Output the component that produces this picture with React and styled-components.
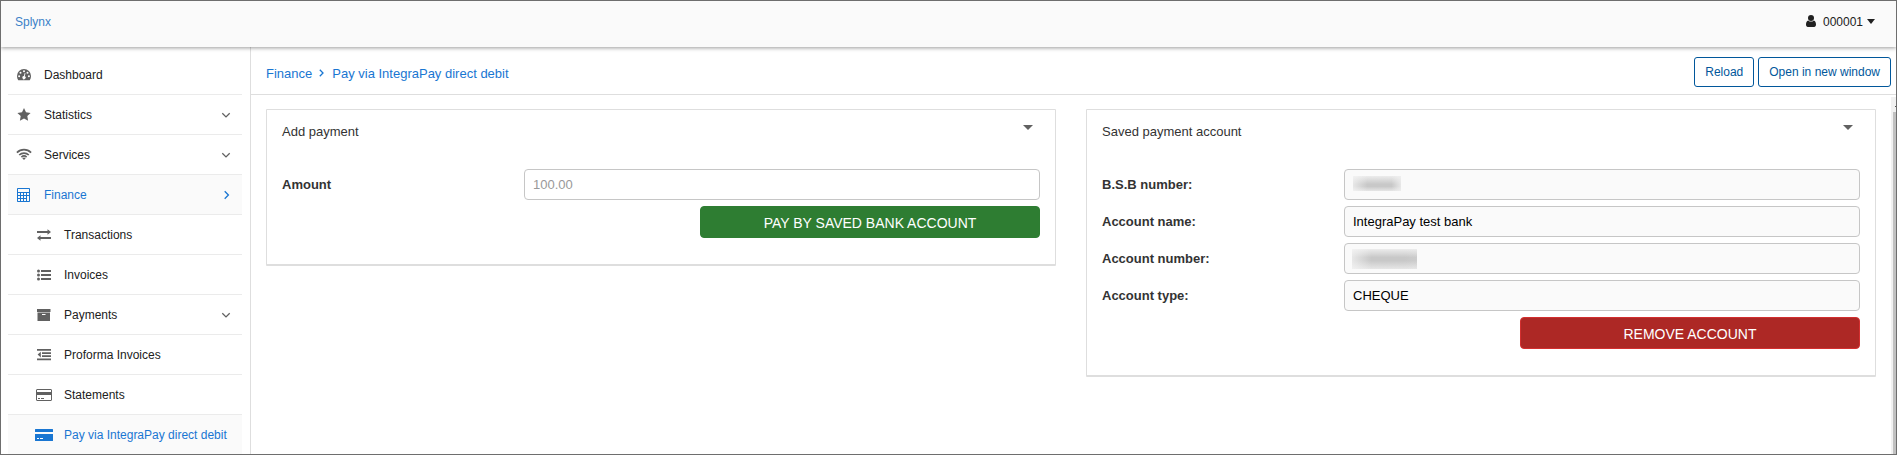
import React from "react";
import styled, { createGlobalStyle, css } from "styled-components";

const Global = createGlobalStyle`
  *, *::before, *::after { box-sizing: border-box; }
  html, body { margin: 0; height: 100%; overflow: hidden; background: #fff; }
  body, input, button { font-family: "Liberation Sans", Arial, sans-serif; }
`;

const Window = styled.div`
  display: flex;
  flex-direction: column;
  width: 1897px;
  height: 455px;
  overflow: hidden;
  border: 1px solid #6e6e6e;
  background: #fff;
  color: #212121;
  font-size: 12px;
`;

const Header = styled.header`
  position: relative;
  z-index: 2;
  flex: none;
  display: flex;
  align-items: center;
  justify-content: space-between;
  height: 46px;
  padding: 0 21px 4px 14px;
  background: #fafafa;
  box-shadow: 0 1px 4px rgba(0, 0, 0, 0.4);
`;

const Brand = styled.a`
  color: #3a81c8;
`;

const UserMenu = styled.div`
  display: flex;
  align-items: center;

  svg {
    margin-bottom: 2px;
  }
`;

const UserName = styled.span`
  margin: 0 4px 0 7px;
`;

const Body = styled.div`
  flex: 1;
  display: flex;
  min-height: 0;
`;

const Sidebar = styled.nav`
  flex: none;
  width: 250px;
  padding: 8px 8px 0 7px;
  border-right: 1px solid #dedede;
`;

const MenuItem = styled.a`
  display: flex;
  align-items: center;
  height: 40px;
  padding: 1px 11px 0 ${(p) => (p.$nested ? 25 : 5)}px;
  border-bottom: 1px solid #ebebeb;
  color: #212121;
  ${(p) =>
    p.$active &&
    css`
      background: #fafafa;
      color: #1976d2;
    `}
`;

const MenuIcon = styled.span`
  flex: none;
  display: flex;
  justify-content: center;
  width: 22px;
  margin-right: 9px;
  color: ${(p) => (p.$active ? "#1976d2" : "#616161")};
`;

const MenuLabel = styled.span`
  flex: 1;
  white-space: nowrap;
`;

const Arrow = styled.svg`
  flex: none;
  fill: none;
  stroke: ${(p) => (p.$active ? "#1976d2" : "#616161")};
  stroke-width: 1.3;
`;

const Main = styled.main`
  flex: 1;
  display: flex;
  flex-direction: column;
  min-width: 0;
`;

const TitleBar = styled.div`
  flex: none;
  display: flex;
  align-items: center;
  justify-content: space-between;
  height: 48px;
  padding: 3px 5px 0 15px;
  border-bottom: 1px solid #dedede;
`;

const Crumbs = styled.div`
  display: flex;
  align-items: center;
  padding-top: 3px;
  font-size: 13px;
  color: #1976d2;
`;

const CrumbArrow = styled.svg`
  margin: 0 8px 2px 7px;
  fill: none;
  stroke: #1976d2;
  stroke-width: 1.3;
`;

const Actions = styled.div`
  display: flex;
  gap: 4px;
`;

const OutlineButton = styled.button`
  height: 30px;
  padding: 0 10px;
  border: 1px solid #01579b;
  border-radius: 3px;
  background: #fff;
  color: #01579b;
  font-size: 12px;
`;

const Scroller = styled.div`
  flex: 1;
  display: flex;
  min-height: 0;
`;

const Content = styled.div`
  flex: 1;
  display: flex;
  align-items: flex-start;
  gap: 30px;
  padding: 14px 15px 0;
`;

const ScrollTrack = styled.div`
  flex: none;
  display: flex;
  flex-direction: column;
  align-items: flex-end;
  width: 5px;
  margin-top: 2px;
  background: #f1f1f1;
`;

const ScrollUp = styled.div`
  width: 1px;
  height: 1px;
  margin: 9px 0 5px;
  background: #555;
`;

const ScrollThumb = styled.div`
  flex: 1;
  width: 3px;
  background: #c1c1c1;
`;

const Card = styled.section`
  flex: 1;
  padding: 0 15px 26px;
  border: 1px solid #dedede;
  border-bottom-width: 2px;
  border-radius: 1px;
`;

const CardHead = styled.div`
  display: flex;
  justify-content: space-between;
  height: 59px;
  padding: 14px 7px 0 0;
  color: #333;
  font-size: 13px;
  line-height: 15px;

  svg {
    margin-top: 1px;
  }
`;

const Caret = styled.svg`
  flex: none;
  fill: ${(p) => p.$color};
`;

const Form = styled.div`
  display: flex;
  flex-direction: column;
  gap: 6px;
`;

const Field = styled.div`
  display: flex;
  align-items: center;
  color: #333;
  font-size: 13px;
  font-weight: bold;
`;

const FieldName = styled.span`
  width: 242px;
`;

const Value = styled.div`
  flex: 1;
  display: flex;
  align-items: center;
  height: 31px;
  padding: 0 8px;
  border: 1px solid #c6c6c6;
  border-radius: 4px;
  background: ${(p) => (p.$readOnly ? "#fafafa" : "#fff")};
  color: ${(p) => (p.$readOnly ? "#000" : "#999")};
  font-weight: normal;
`;

const Redacted = styled.span`
  width: ${(p) => p.$width}px;
  height: ${(p) => p.$height}px;
  margin: ${(p) => p.$margin};
  background:
    linear-gradient(
      90deg,
      rgba(245, 245, 245, 0.7) 0%,
      rgba(245, 245, 245, 0) 30%,
      rgba(245, 245, 245, 0) 80%,
      rgba(240, 240, 240, ${(p) => p.$fade}) 100%
    ),
    linear-gradient(#ececec 0%, #c8c8c8 ${(p) => p.$peak - 8}%, #c8c8c8 ${(p) => p.$peak + 8}%, #e6e6e6 100%);
`;

const SubmitButton = styled.button`
  align-self: flex-end;
  width: 340px;
  height: 32px;
  padding: 1px 0 0;
  border: 1px solid ${(p) => (p.$danger ? "#d32f2f" : "#2e7d32")};
  border-radius: 4px;
  background: ${(p) => (p.$danger ? "#ad2825" : "#2e7d32")};
  color: #fff;
  font-size: 14px;
`;

const SubmitLabel = styled.span`
  display: inline-block;
  transform: scaleY(1.08);
`;

const glyphs = {
  dashboard: (
    <svg width="14" height="12" viewBox="0 0 14 12" fill="currentColor">
      <path d="M7 0a7 7 0 0 0-7 7c0 1.500.4 2.900 1.100 4 .1.200.3.300.5.300h10.800c.2 0 .4-.1.500-.3A7.300 7.300 0 0 0 14 7a7 7 0 0 0-7-7z" />
      <g fill="#fff">
        <circle cx="2.1" cy="7.200" r="1" />
        <circle cx="3.5" cy="3.700" r="1" />
        <circle cx="7" cy="2.200" r="1" />
        <circle cx="10.5" cy="3.700" r="1" />
        <circle cx="11.9" cy="7.200" r="1" />
        <path d="M7.7 4l.8.2-.7 3a1.600 1.600 0 1 1-.9-.2z" />
      </g>
    </svg>
  ),
  star: (
    <svg width="14" height="14" viewBox="0 0 14 14" fill="currentColor">
      <path d="M7 0l2 4.300 4.600.6-3.300 3.200.8 4.700L7 10.500l-4.100 2.300.8-4.700L.4 4.900 5 4.300z" />
    </svg>
  ),
  wifi: (
    <svg width="16" height="14" viewBox="0 0 16 14" fill="none" stroke="currentColor" strokeWidth="1.7">
      <path d="M.9 4.600a10.200 10.200 0 0 1 14.200 0M3.200 7a7 7 0 0 1 9.600 0M5.400 9.200a3.800 3.800 0 0 1 5.200 0" />
      <path d="M6.300 10.200L8 12l1.700-1.800a2.500 2.500 0 0 0-3.400 0z" fill="currentColor" stroke="none" />
    </svg>
  ),
  calculator: (
    <svg width="14" height="14" viewBox="0 0 14 14">
      <rect width="13" height="14" rx=".8" fill="currentColor" />
      <g fill="#fafafa">
        <path d="M1 1h11v3H1z" />
        <path d="M1 5h2v2H1zM4 5h2v2H4zM7 5h2v2H7zM10 5h2v2h-2zM1 8h2v2H1zM4 8h2v2H4zM7 8h2v2H7zM1 11h2v2H1zM4 11h2v2H4zM7 11h2v2H7zM10 8h2v5h-2z" />
      </g>
    </svg>
  ),
  exchange: (
    <svg width="14" height="12" viewBox="0 0 14 12" fill="currentColor">
      <path d="M0 2h10.500V.3L14 3l-3.500 2.700V4H0zM14 8H3.500V6.300L0 9l3.500 2.700V10H14z" />
    </svg>
  ),
  list: (
    <svg width="14" height="12" viewBox="0 0 14 12" fill="currentColor">
      <path d="M4 1h10v2H4zM4 5h10v2H4zM4 9h10v2H4z" />
      <circle cx="1.5" cy="2" r="1.500" />
      <circle cx="1.5" cy="6" r="1.500" />
      <circle cx="1.5" cy="10" r="1.500" />
    </svg>
  ),
  archive: (
    <svg width="14" height="12" viewBox="0 0 14 12" fill="currentColor">
      <path d="M0 0h13.500v3H0z" />
      <path fillRule="evenodd" d="M.5 3.500H13V12H.5zM5 5v1h3.500V5z" />
    </svg>
  ),
  outdent: (
    <svg width="14" height="12" viewBox="0 0 14 12" fill="currentColor">
      <path d="M0 0h14v1.800H0zM5 3.200h9V5H5zM5 6.300h9v1.800H5zM0 9.500h14v1.800H0zM3.800 2.800v5.600L.6 5.600z" />
    </svg>
  ),
  cardOutline: (
    <svg width="16" height="12" viewBox="0 0 16 12">
      <rect x=".5" y=".5" width="15" height="11" rx=".5" fill="none" stroke="currentColor" />
      <path d="M1 3h14v3H1zM2 9h2v1H2zM5 9h3v1H5z" fill="currentColor" />
    </svg>
  ),
  card: (
    <svg width="18" height="12" viewBox="0 0 18 12">
      <path d="M.5 0h17q.5 0 .5.500V3H0V.5Q0 0 .5 0zM0 5h18v6.500q0 .5-.5.500H.5q-.5 0-.5-.5z" fill="currentColor" />
      <path d="M2 9h2v1H2zM5 9h3v1H5z" fill="#fff" />
    </svg>
  ),
};

const menu = [
  { icon: "dashboard", label: "Dashboard" },
  { icon: "star", label: "Statistics", arrow: "down" },
  { icon: "wifi", label: "Services", arrow: "down" },
  { icon: "calculator", label: "Finance", arrow: "right", active: true },
  { icon: "exchange", label: "Transactions", nested: true },
  { icon: "list", label: "Invoices", nested: true },
  { icon: "archive", label: "Payments", nested: true, arrow: "down" },
  { icon: "outdent", label: "Proforma Invoices", nested: true },
  { icon: "cardOutline", label: "Statements", nested: true },
  { icon: "card", label: "Pay via IntegraPay direct debit", nested: true, active: true },
];

function CaretDown({ color = "#616161", width = 10 }) {
  return (
    <Caret $color={color} width={width} height="5" viewBox="0 0 10 5" preserveAspectRatio="none">
      <path d="M0 0h10L5 5z" />
    </Caret>
  );
}

function MenuArrow({ direction, active }) {
  return (
    <Arrow $active={active} width="10" height="10" viewBox="0 0 10 10">
      <path d={direction === "down" ? "M1.300 3.200L5 6.900l3.700-3.700" : "M3.700 1.300L7.400 5 3.700 8.700"} />
    </Arrow>
  );
}

function Panel({ title, children }) {
  return (
    <Card>
      <CardHead>
        <span>{title}</span>
        <CaretDown />
      </CardHead>
      <Form>{children}</Form>
    </Card>
  );
}

function Row({ name, readOnly, children }) {
  return (
    <Field>
      <FieldName>{name}</FieldName>
      <Value $readOnly={readOnly}>{children}</Value>
    </Field>
  );
}

export default function App() {
  return (
    <>
      <Global />
      <Window>
        <Header>
          <Brand>Splynx</Brand>
          <UserMenu>
            <svg width="10" height="12" viewBox="0 0 10 12" fill="#212121">
              <circle cx="5" cy="3" r="3" />
              <path d="M2.300 5.400C.6 5.700 0 7.600 0 9.800 0 11 .8 12 1.800 12h6.400c1 0 1.800-1 1.800-2.200 0-2.200-.6-4.100-2.300-4.400a3.700 3.700 0 0 1-5.400 0z" />
            </svg>
            <UserName>000001</UserName>
            <CaretDown color="#212121" width={8} />
          </UserMenu>
        </Header>
        <Body>
          <Sidebar>
            {menu.map((m) => (
              <MenuItem key={m.label} $nested={m.nested} $active={m.active}>
                <MenuIcon $active={m.active}>{glyphs[m.icon]}</MenuIcon>
                <MenuLabel>{m.label}</MenuLabel>
                {m.arrow && <MenuArrow direction={m.arrow} active={m.active} />}
              </MenuItem>
            ))}
          </Sidebar>
          <Main>
            <TitleBar>
              <Crumbs>
                <span>Finance</span>
                <CrumbArrow width="5" height="8" viewBox="0 0 5 8">
                  <path d="M.8.8L4 4 .8 7.200" />
                </CrumbArrow>
                <span>Pay via IntegraPay direct debit</span>
              </Crumbs>
              <Actions>
                <OutlineButton>Reload</OutlineButton>
                <OutlineButton>Open in new window</OutlineButton>
              </Actions>
            </TitleBar>
            <Scroller>
              <Content>
                <Panel title="Add payment">
                  <Row name="Amount">100.00</Row>
                  <SubmitButton>
                    <SubmitLabel>PAY BY SAVED BANK ACCOUNT</SubmitLabel>
                  </SubmitButton>
                </Panel>
                <Panel title="Saved payment account">
                  <Row name="B.S.B number:" readOnly>
                    <Redacted $width={48} $height={15} $margin="0 0 2px 0" $fade={0.8} $peak={62} />
                  </Row>
                  <Row name="Account name:" readOnly>IntegraPay test bank</Row>
                  <Row name="Account number:" readOnly>
                    <Redacted $width={65} $height={20} $margin="0 0 0 -1px" $fade={0.1} $peak={50} />
                  </Row>
                  <Row name="Account type:" readOnly>CHEQUE</Row>
                  <SubmitButton $danger>
                    <SubmitLabel>REMOVE ACCOUNT</SubmitLabel>
                  </SubmitButton>
                </Panel>
              </Content>
              <ScrollTrack>
                <ScrollUp />
                <ScrollThumb />
              </ScrollTrack>
            </Scroller>
          </Main>
        </Body>
      </Window>
    </>
  );
}
